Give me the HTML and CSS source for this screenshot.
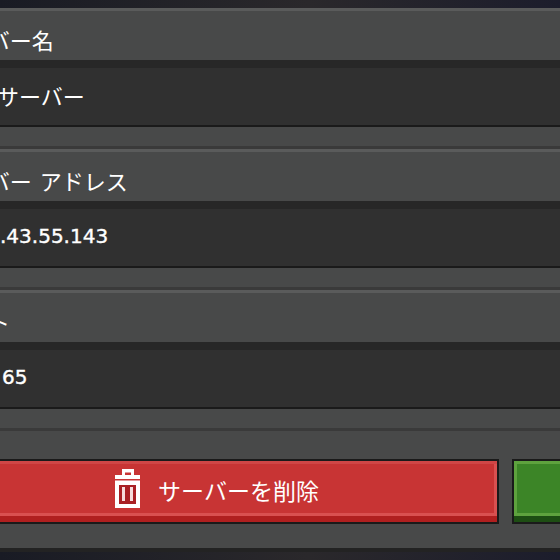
FILE: index.html
```html
<!DOCTYPE html>
<html lang="ja">
<head>
<meta charset="utf-8">
<title>サーバーの編集</title>
<link rel="stylesheet" href="styles.css">
</head>
<body>
<main class="panel">
  <section class="field">
    <div class="label"><span class="label-text">サーバー名</span></div>
    <div class="input"><span class="value value-name">サーバー</span></div>
  </section>
  <section class="field">
    <div class="label"><span class="label-text">サーバー アドレス</span></div>
    <div class="input"><span class="value value-address">.43.55.143</span></div>
  </section>
  <section class="field">
    <div class="label"><span class="label-text">ポート</span></div>
    <div class="input"><span class="value value-port">65</span></div>
  </section>
  <div class="actions">
    <button class="btn btn-red" type="button">
      <svg class="trash" viewBox="0 0 25 39" width="25" height="39" aria-hidden="true">
        <path fill="#fff" fill-rule="evenodd" d="M7 0h12v6h6v4H0V6h7zM10 3.500V6h6V3.500zM0 11.500h25V39H0z"/>
        <path fill="#a92024" d="M4 16h17v19H4z"/>
        <path fill="#f6dcdc" d="M7 18h3v14H7zM15 18h3v14h-3z"/>
      </svg>
      <span class="btn-text">サーバーを削除</span>
    </button>
    <button class="btn btn-green" type="button" aria-label="保存"></button>
  </div>
</main>
</body>
</html>
```

FILE: styles.css
```css
* { box-sizing: border-box; }
html, body { margin: 0; height: 100%; }
body {
  width: 560px;
  height: 560px;
  overflow: hidden;
  background: linear-gradient(90deg, #191b24, #2a282b 55%, #1c1d2c);
  padding-top: 8px;
  font-family: "Noto Sans CJK JP", "Noto Sans", sans-serif;
  color: #fff;
}
.panel {
  height: 544px;
  background: #484949;
  border-bottom: 4px solid #232323;
}
.field {
  height: 141px;
  border-bottom: 3px solid #3a3a3a;
}
.label {
  height: 52px;
  border-top: 3px solid #5a5b5b;
  padding-top: 6px;
  display: flex;
  align-items: center;
  font-size: 22px;
  line-height: 1;
  background: #484949;
}
.label-text { margin-left: -56px; white-space: nowrap; word-spacing: 3px; }
.input {
  height: 67px;
  background: #303030;
  border-top: 8px solid #272727;
  border-bottom: 2px solid #1a1a1a;
  padding-bottom: 4px;
  display: flex;
  align-items: center;
  font-size: 22px;
  line-height: 1;
}
.value { white-space: nowrap; }
.value-name { margin-left: -3px; }
.value-address, .value-port {
  font-family: "DejaVu Sans", sans-serif;
  font-size: 20px;
  -webkit-text-stroke: 0.4px #fff;
}
.value-port { margin-left: 2px; }
.actions {
  height: 65px;
  margin-top: 28px;
  display: flex;
  gap: 13px;
  margin-left: -65px;
}
.btn {
  border: 2px solid #1a1a1a;
  padding: 0;
  font: inherit;
  color: inherit;
  display: flex;
  align-items: center;
  justify-content: center;
  flex: none;
}
.btn-red {
  width: 564px;
  background: #c83434;
  box-shadow: inset 0 -6px 0 #b01f1f, inset 0 -9px 0 #d95050, inset 0 3px 0 #d04646, inset -3px 0 0 #d95050;
  gap: 18px;
  padding-bottom: 6px;
}
.btn-green {
  width: 80px;
  background: #3c8527;
  box-shadow: inset 0 -6px 0 #1d4d13, inset 0 -9px 0 #5ea23e, inset 3px 0 0 #5ea23e, inset 0 3px 0 #5ea23e;
}
.trash { display: block; }
.btn-text { font-size: 23px; line-height: 1; margin-top: 3px; }
```
